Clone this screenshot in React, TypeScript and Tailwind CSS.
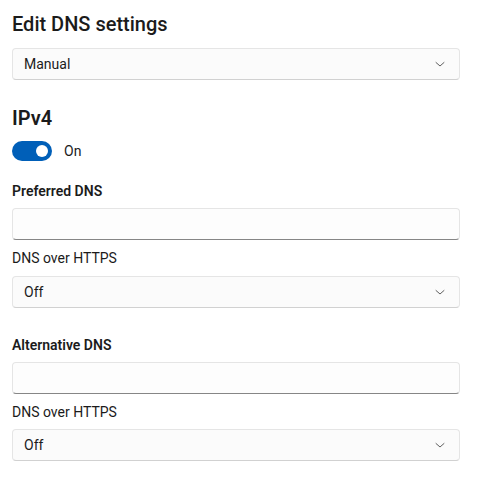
import { useState } from "react";

const font = { fontFamily: '"Segoe UI", Roboto, "Noto Sans", sans-serif' };

const Chevron = () => (
  <svg width="12" height="12" viewBox="0 0 12 12" fill="none">
    <path d="M2 4.5 L6 8 L10 4.5" stroke="#5f5f5f" strokeWidth="1" strokeLinecap="round" strokeLinejoin="round" />
  </svg>
);

const Select = ({ value, className = "" }: { value: string; className?: string }) => (
  <div
    className={`flex h-8 w-[448px] items-center justify-between rounded-[4px] border border-[#e5e5e5] border-b-[#d1d1d1] bg-[#fbfbfb] pl-[11px] pr-[13px] text-[14px] leading-5 text-[#1b1b1b] ${className}`}
  >
    <span>{value}</span>
    <Chevron />
  </div>
);

const TextBox = ({ className = "" }: { className?: string }) => (
  <div
    className={`h-8 w-[448px] rounded-[4px] border border-[#e5e5e5] border-b-[#868686] bg-[#fdfdfd] ${className}`}
  />
);

export default function App() {
  const [on, setOn] = useState(true);

  return (
    <div className="min-h-[480px] w-[481px] bg-white px-3 pt-[10px] text-[#1b1b1b]" style={font}>
      <h1 className="text-[20px] leading-[28px] font-medium">Edit DNS settings</h1>
      <Select value="Manual" className="mt-[10px]" />

      <h2 className="mt-[24px] text-[20px] leading-[28px] font-semibold">IPv4</h2>
      <div className="mt-[9px] flex h-5 items-center gap-3">
        <button
          onClick={() => setOn(!on)}
          className={`flex h-5 w-10 items-center rounded-full px-[4px] ${on ? "justify-end bg-[#005fb8]" : "justify-start border border-[#868686] bg-white"}`}
        >
          <span className={`h-3 w-3 rounded-full ${on ? "bg-white" : "bg-[#5f5f5f]"}`} />
        </button>
        <span className="text-[14px] leading-5">{on ? "On" : "Off"}</span>
      </div>

      <p className="mt-[20px] text-[14px] leading-5 font-semibold">Preferred DNS</p>
      <TextBox className="mt-[7px]" />
      <p className="mt-[8px] text-[14px] leading-5">DNS over HTTPS</p>
      <Select value="Off" className="mt-[8px]" />

      <p className="mt-[27px] text-[14px] leading-5 font-semibold">Alternative DNS</p>
      <TextBox className="mt-[7px]" />
      <p className="mt-[8px] text-[14px] leading-5">DNS over HTTPS</p>
      <Select value="Off" className="mt-[7px]" />
    </div>
  );
}
